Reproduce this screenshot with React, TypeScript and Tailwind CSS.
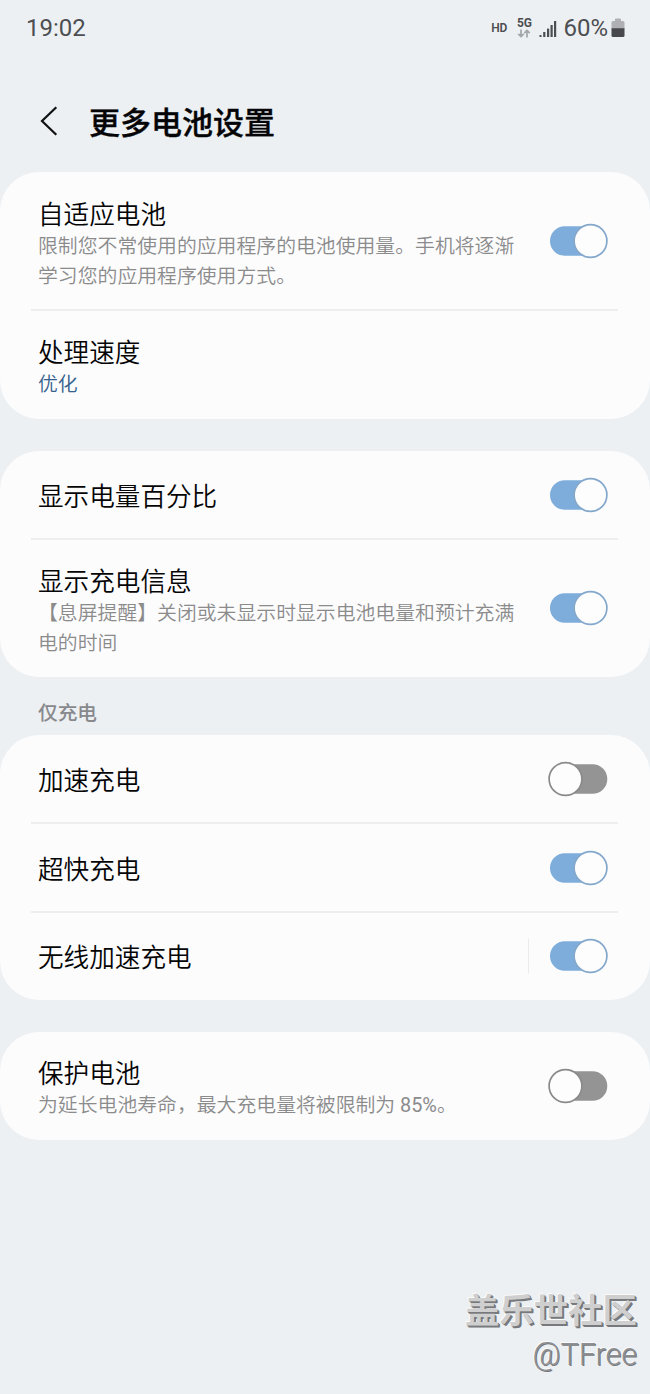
import type { ReactNode } from "react";

function Toggle({ on }: { on: boolean }) {
  return (
    <svg width="60" height="36" viewBox="0 0 60 36" className="shrink-0" role="switch" aria-checked={on}>
      {on ? (
        <>
          <rect x="2" y="3.2" width="54" height="29.6" rx="14.8" fill="#7eaddb" />
          <circle cx="42.5" cy="18" r="16.4" fill="#fdfdfd" stroke="#84a8cb" strokeWidth="1.7" />
        </>
      ) : (
        <>
          <rect x="4" y="3.2" width="55.3" height="29.6" rx="14.8" fill="#949494" />
          <circle cx="17.5" cy="18" r="16.4" fill="#fdfdfd" stroke="#8a8a8a" strokeWidth="1.7" />
        </>
      )}
    </svg>
  );
}

function Card({ children }: { children: ReactNode }) {
  return <section className="flex flex-col rounded-[39px] bg-[#fcfcfd]">{children}</section>;
}

function Divider() {
  return <div className="mr-8 -my-px ml-[31px] h-0.5 bg-[#eeeeef]" />;
}

type RowProps = {
  title: string;
  lines?: ReactNode[];
  accent?: boolean;
  on?: boolean;
  split?: boolean;
};

function Row({ title, lines, accent, on, split }: RowProps) {
  return (
    <div className={`flex items-center justify-between pr-[42px] pl-[38px] ${lines ? "" : "h-[88.5px]"}`}>
      <div className={lines ? "pt-[25.5px] pb-[18.8px]" : "pt-[4px]"}>
        <h2 className="text-[25.6px] leading-[34px] font-[350] whitespace-nowrap text-[#050505]">{title}</h2>
        {lines?.map((line, index) => (
          <p
            key={index}
            className={`text-[19.85px] leading-[30px] font-[350] whitespace-nowrap ${accent ? "text-[#35618c]" : "text-[#8b8b8c]"}`}
          >
            {line}
          </p>
        ))}
      </div>
      {on !== undefined && (
        <div className="flex items-center gap-[19px]">
          {split && <div className="h-[34px] w-px bg-[#ebebed]" />}
          <Toggle on={on} />
        </div>
      )}
    </div>
  );
}

function StatusBar() {
  return (
    <header className="flex h-[56px] items-center justify-between pr-[25px] pl-[26px] font-['Roboto',sans-serif] text-[#4c4e51]">
      <span className="text-[24px] leading-7">19:02</span>
      <div className="flex items-center">
        <span className="mr-[9px] text-[12px] font-semibold">HD</span>
        <div className="mr-[7px] flex w-4 flex-col items-center">
          <span className="text-[12px] leading-[11px] font-bold">5G</span>
          <svg width="14" height="9" viewBox="0 0 14 9" fill="none" stroke="#a3a5a8" strokeWidth="1.7">
            <path d="M4 0.5v7M1.3 4.8 4 7.5l2.7-2.7M10 8.5v-7M7.3 4.2 10 1.5l2.7 2.7" />
          </svg>
        </div>
        <svg width="18" height="20" viewBox="0 -2 18 20" fill="#4c4e51" className="mr-[6px]">
          <rect x="0.5" y="15" width="2" height="2" />
          <rect x="4.2" y="12" width="2.2" height="5" />
          <rect x="8" y="8.6" width="2.2" height="8.4" />
          <rect x="11.5" y="5" width="2.2" height="12" />
          <rect x="15" y="1" width="2.2" height="16" />
        </svg>
        <span className="mr-[3px] text-[24px] leading-7">60%</span>
        <svg width="14" height="20" viewBox="0 0 14 20">
          <path d="M4 1.5Q4 .5 5 .5h4q1 0 1 1V3h2q1.5 0 1.5 1.5V11H.5V4.5Q.5 3 2 3h2z" fill="#aeb0b3" />
          <path d="M.5 10.3h13v7.2q0 1.5-1.5 1.5H2q-1.5 0-1.5-1.5z" fill="#47494c" />
        </svg>
      </div>
    </header>
  );
}

export default function App() {
  return (
    <div className="flex h-[1394px] w-[650px] flex-col overflow-hidden bg-[#ecf0f3] font-['Roboto','Noto_Sans_CJK_SC',sans-serif]">
      <StatusBar />
      <div className="flex h-[116px] items-center pt-[15px] pl-[39px]">
        <svg width="20" height="32" viewBox="0 0 20 32" fill="none" stroke="#111" strokeWidth="2.2" className="mr-[30px]">
          <path d="M17.3 1.2 3 15l14.3 13.8" />
        </svg>
        <h1 className="pt-[4px] text-[31px] leading-10 font-medium text-[#050507] [-webkit-text-stroke:0.35px_#050507]">
          更多电池设置
        </h1>
      </div>
      <main className="flex flex-col">
        <Card>
          <Row
            title="自适应电池"
            lines={["限制您不常使用的应用程序的电池使用量。手机将逐渐", "学习您的应用程序使用方式。"]}
            on={true}
          />
          <Divider />
          <Row title="处理速度" lines={["优化"]} accent />
        </Card>
        <div className="h-8" />
        <Card>
          <Row title="显示电量百分比" on={true} />
          <Divider />
          <Row title="显示充电信息" lines={["【息屏提醒】关闭或未显示时显示电池电量和预计充满", "电的时间"]} on={true} />
        </Card>
        <h3 className="flex h-[57.5px] items-center pt-[15px] pl-[38px] text-[19.7px] font-medium text-[#88898c]">
          仅充电
        </h3>
        <Card>
          <Row title="加速充电" on={false} />
          <Divider />
          <Row title="超快充电" on={true} />
          <Divider />
          <Row title="无线加速充电" on={true} split />
        </Card>
        <div className="h-[31.5px]" />
        <Card>
          <Row
            title="保护电池"
            lines={[<>为延长电池寿命，最大充电量将被限制为 <span className="font-normal">85%</span>。</>]}
            on={false}
          />
        </Card>
      </main>
      <footer className="mt-auto flex flex-col items-end pr-[13px] pb-[18px] text-[#cfcfd0]">
        <span className="text-[34.4px] leading-[46px] font-bold [text-shadow:1px_1px_0_#77797c,2px_2px_0_#77797c,-1px_-1px_0_#fafafa]">
          盖乐世社区
        </span>
        <span className="text-[30.5px] leading-[42px] font-light text-[#8d8f92] [text-shadow:1px_1px_0_#77797c,-1px_-1px_0_#fafafa]">
          @TFree
        </span>
      </footer>
    </div>
  );
}
